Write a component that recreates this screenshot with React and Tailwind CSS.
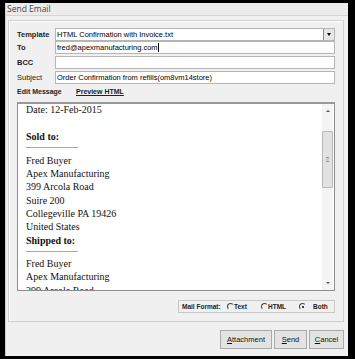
import React from "react";

const ui = { fontFamily: '"Liberation Sans", Arial, sans-serif' };
const serif = { fontFamily: '"Liberation Serif", "Times New Roman", serif' };

const Row = ({ label, bold, className, children }) => (
  <div className={"flex items-center h-[13px] " + (className || "")}>
    <div className={"w-[38px] text-[7.5px] text-[#222] " + (bold ? "font-bold" : "")}>{label}</div>
    <div className="relative w-[280px] h-full bg-white border border-[#b5b5b5] flex items-center pl-[1px] text-[7.5px] text-black">
      {children}
    </div>
  </div>
);

const Radio = ({ checked, label }) => (
  <div className="flex items-center">
    <div className="w-[7px] h-[7px] rounded-full border border-t-[#444] border-l-[#444] border-r-transparent border-b-transparent flex items-center justify-center">
      {checked && <div className="w-[2px] h-[2px] rounded-full bg-black" />}
    </div>
    <span className="font-bold">{label}</span>
  </div>
);

const Btn = ({ w, first, rest }) => (
  <div className={"h-[19px] bg-[#e3e3e3] border border-[#a9a9a9] flex items-center justify-center text-[7.5px] text-[#111] " + w}>
    <span className="underline">{first}</span>{rest}
  </div>
);

const Line = ({ children, bold }) => (
  <div className={"h-[13.3px] leading-[13.3px] whitespace-nowrap " + (bold ? "font-bold" : "")}>{children}</div>
);

export default function App() {
  return (
    <div className="w-[355px] h-[359px] bg-black pt-[3px] pl-[5px] pr-[7px] pb-[3px]" style={ui}>
      <div className="h-full flex flex-col bg-[#f0f0f0] border-l border-[#cfcfcf]">
        {/* title bar */}
        <div className="h-[13px] flex items-center pl-[1px] border-b border-[#d4d4d4] bg-[#ececec] text-[8.5px] text-[#444]" style={{ fontFamily: '"Open Sans", sans-serif' }}>
          Send Email
        </div>

        {/* group box */}
        <div className="ml-[2px] mt-[4px] w-[336px] h-[302px] border border-[#d0d0d0] shadow-[inset_1px_1px_0_#fff] px-[8px] pt-[7px] flex flex-col">
          <Row label="Template" bold>
            <span>HTML Confirmation with Invoice.txt</span>
            <div className="absolute right-[0px] top-[0px] bottom-[0px] w-[11px] bg-[#e6e6e6] border-l border-[#8a8a8a] flex items-center justify-center">
              <div className="w-0 h-0 border-l-[2.5px] border-r-[2.5px] border-t-[3px] border-l-transparent border-r-transparent border-t-black" />
            </div>
          </Row>
          <Row label="To" bold>
            <span>fred@apexmanufacturing.com</span>
            <div className="w-[1px] h-[9px] bg-black" />
          </Row>
          <Row label="BCC" bold className="mt-[2px]" />
          <Row label="Subject" className="mt-[2px]">
            <span>Order Confirmation from refills(om8vm14store)</span>
          </Row>

          <div className="mt-[4px] h-[9px] flex items-center text-[7px] text-[#222]">
            <span className="font-bold w-[59px]">Edit Message</span>
            <span className="font-bold underline">Preview HTML</span>
          </div>

          {/* message area */}
          <div className="mt-[5px] h-[189px] bg-white border border-[#8c8c8c] border-t-2 border-t-[#9a9a9a] flex overflow-hidden">
            <div className="flex-1 overflow-hidden pl-[8px] mt-[-1px] text-[10px] text-[#111]" style={serif}>
              <Line>Date: 12-Feb-2015</Line>
              <Line>&nbsp;</Line>
              <Line bold>Sold to:</Line>
              <div className="w-[52px] h-[1px] bg-[#a8a8a8] mt-[4px] mb-[6px]" />
              <Line>Fred Buyer</Line>
              <Line>Apex Manufacturing</Line>
              <Line>399 Arcola Road</Line>
              <Line>Suire 200</Line>
              <Line>Collegeville PA 19426</Line>
              <Line>United States</Line>
              <Line bold>Shipped to:</Line>
              <div className="w-[52px] h-[1px] bg-[#a8a8a8] mt-[4px] mb-[5px]" />
              <Line>Fred Buyer</Line>
              <Line>Apex Manufacturing</Line>
              <Line>399 Arcola Road</Line>
            </div>
            <div className="w-[11px] mr-[1px] flex flex-col bg-[#f4f4f4]">
              <div className="h-[14px] flex items-center justify-center">
                <div className="w-0 h-0 border-l-[2px] border-r-[2px] border-b-[2.5px] border-l-transparent border-r-transparent border-b-[#555]" />
              </div>
              <div className="h-[13px]" />
              <div className="h-[57px] bg-[#e2e2e2] border border-[#b8b8b8] rounded-[1px] flex items-center justify-center">
                <div className="w-[3px] h-[5px] border-y border-[#999] bg-[#ccc]" />
              </div>
              <div className="flex-1" />
              <div className="h-[14px] flex items-center justify-center">
                <div className="w-0 h-0 border-l-[2px] border-r-[2px] border-t-[2.5px] border-l-transparent border-r-transparent border-t-[#555]" />
              </div>
            </div>
          </div>

          {/* mail format */}
          <div className="mt-[9px] self-end w-[157px] h-[13px] border border-[#c8c8c8] bg-[#f0f0f0] flex items-center pl-[3px] text-[6.5px] text-[#222]">
            <span className="font-bold w-[45px]">Mail Format:</span>
            <div className="w-[34px]"><Radio label=" Text" /></div>
            <div className="w-[38px]"><Radio label=" HTML" /></div>
            <div className="flex items-center">
              <Radio checked label="" />
              <span className="font-bold ml-[7px]">Both</span>
            </div>
          </div>
        </div>

        {/* buttons */}
        <div className="mt-[8px] flex justify-end gap-[2px] pr-[4px]">
          <Btn w="w-[52px]" first="A" rest="ttachment" />
          <Btn w="w-[33px]" first="S" rest="end" />
          <Btn w="w-[35px]" first="C" rest="ancel" />
        </div>
      </div>
    </div>
  );
}
